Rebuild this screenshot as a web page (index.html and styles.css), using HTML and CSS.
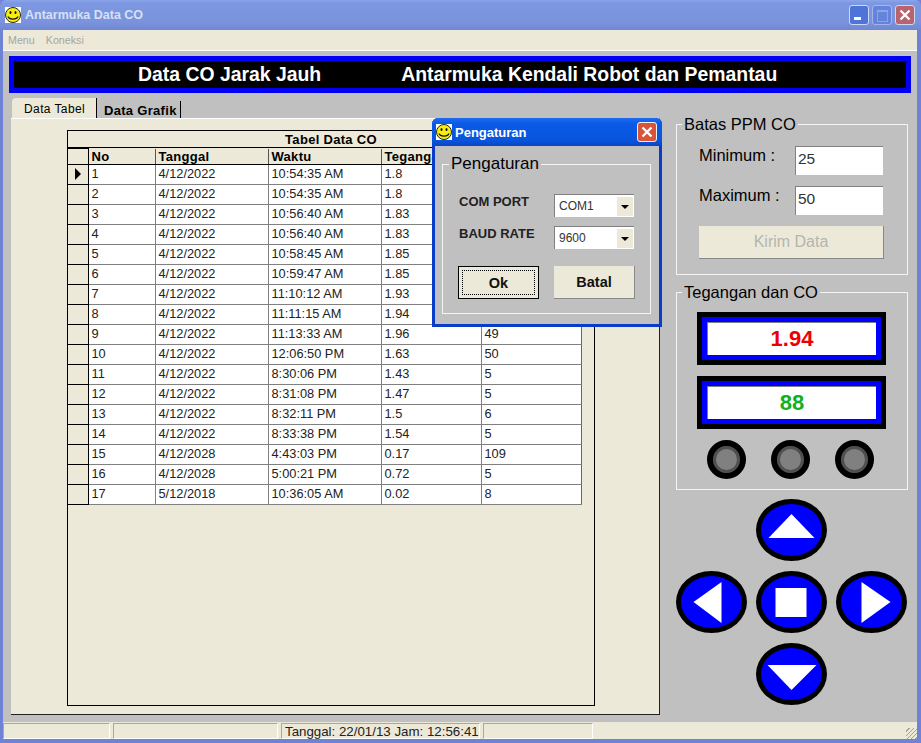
FILE: index.html
```html
<!DOCTYPE html>
<html>
    <head>
        <title>Antarmuka Data CO</title>
        <meta charset="UTF-8" />
        <link rel="stylesheet" href="styles.css">
    </head>
    <body>
        <svg width="0" height="0" class="defs">
            <symbol id="smiley" viewBox="0 0 16 16">
                <rect width="16" height="16" fill="#fff"/>
                <circle cx="8" cy="8" r="7.5" fill="#f6ee10" stroke="#222" stroke-width="1"/>
                <ellipse cx="5.5" cy="5.5" rx="1" ry="1.6" fill="#111"/>
                <ellipse cx="10.5" cy="5.5" rx="1" ry="1.6" fill="#111"/>
                <path d="M3 9.5c1.2 3.4 8.800 3.400 10 0" fill="none" stroke="#111" stroke-width="1.200"/>
            </symbol>
        </svg>
        <div class="window">
            <div class="titlebar">
                <svg class="app-icon"><use href="#smiley"/></svg>
                <span class="title-text">Antarmuka Data CO</span>
                <div class="win-buttons">
                    <div class="win-btn"><span class="min-mark"></span></div>
                    <div class="win-btn win-btn-off"><span class="max-mark"></span></div>
                    <div class="win-btn win-btn-close">
                        <svg viewBox="0 0 20 20"><path d="M5 5l10 10M15 5L5 15" stroke="#fff" stroke-width="2.600"/></svg>
                    </div>
                </div>
            </div>
            <div class="menubar">
                <span>Menu</span>
                <span>Koneksi</span>
            </div>
            <div class="client">
                <div class="banner">
                    <span>Data CO Jarak Jauh</span>
                    <span>Antarmuka Kendali Robot dan Pemantau</span>
                </div>
                <div class="main">
                    <div class="tabs-area">
                        <div class="tab-strip">
                            <div class="tab tab-active">Data Tabel</div>
                            <div class="tab">Data Grafik</div>
                        </div>
                        <div class="tab-pane">
                            <div class="grid">
                                <div class="grid-caption">Tabel Data CO</div>
                                <table>
                                    <colgroup>
                                        <col class="col-ind"><col class="col-no"><col class="col-date">
                                        <col class="col-time"><col class="col-volt"><col class="col-co">
                                    </colgroup>
                                    <thead>
                                        <tr><th class="ind"></th><th>No</th><th>Tanggal</th><th>Waktu</th><th>Tegangan</th><th>CO</th></tr>
                                    </thead>
                                    <tbody id="rows"></tbody>
                                </table>
                            </div>
                        </div>
                    </div>
                    <div class="side">
                        <fieldset class="group group-limit">
                            <legend>Batas PPM CO</legend>
                            <div class="limit-row"><label>Minimum :</label><div class="textbox">25</div></div>
                            <div class="limit-row"><label>Maximum :</label><div class="textbox">50</div></div>
                            <button class="send-btn">Kirim Data</button>
                        </fieldset>
                        <fieldset class="group group-volt">
                            <legend>Tegangan dan CO</legend>
                            <div class="readout"><div class="readout-inner red">1.94</div></div>
                            <div class="readout"><div class="readout-inner green">88</div></div>
                            <div class="lamps">
                                <div class="lamp"></div>
                                <div class="lamp"></div>
                                <div class="lamp"></div>
                            </div>
                        </fieldset>
                        <div class="pad">
                            <div class="pad-btn pad-up"><svg viewBox="0 0 70 62"><path d="M35 15L58 39H12z"/></svg></div>
                            <div class="pad-btn pad-left"><svg viewBox="0 0 70 62"><path d="M45 11V52L17 31z"/></svg></div>
                            <div class="pad-btn pad-stop"><svg viewBox="0 0 70 62"><path d="M19 17H50V46H19z"/></svg></div>
                            <div class="pad-btn pad-right"><svg viewBox="0 0 70 62"><path d="M25 11V52L54 31z"/></svg></div>
                            <div class="pad-btn pad-down"><svg viewBox="0 0 70 62"><path d="M11 22H60L35 47z"/></svg></div>
                        </div>
                    </div>
                </div>
                <div class="statusbar">
                    <div class="panel p1"></div>
                    <div class="panel p2"></div>
                    <div class="panel p3">Tanggal: 22/01/13 Jam: 12:56:41</div>
                    <div class="panel p4"></div>
                    <div class="panel p5"></div>
                </div>
            </div>
        </div>

        <div class="dialog">
            <div class="dialog-title">
                <svg class="app-icon"><use href="#smiley"/></svg>
                <span>Pengaturan</span>
                <div class="dialog-close">
                    <svg viewBox="0 0 20 20"><path d="M5 5l10 10M15 5L5 15" stroke="#fff" stroke-width="2.600"/></svg>
                </div>
            </div>
            <div class="dialog-body">
                <fieldset class="group group-dialog">
                    <legend>Pengaturan</legend>
                    <div class="combo-row">
                        <label>COM PORT</label>
                        <div class="combo"><span>COM1</span><i class="combo-arrow"></i></div>
                    </div>
                    <div class="combo-row">
                        <label>BAUD RATE</label>
                        <div class="combo"><span>9600</span><i class="combo-arrow"></i></div>
                    </div>
                    <div class="dialog-actions">
                        <button class="dlg-btn dlg-default"><span>Ok</span></button>
                        <button class="dlg-btn"><span>Batal</span></button>
                    </div>
                </fieldset>
            </div>
        </div>

        <script>
            const data = [
                ["4/12/2022", "10:54:35 AM", "1.8", "45"],
                ["4/12/2022", "10:54:35 AM", "1.8", "45"],
                ["4/12/2022", "10:56:40 AM", "1.83", "46"],
                ["4/12/2022", "10:56:40 AM", "1.83", "46"],
                ["4/12/2022", "10:58:45 AM", "1.85", "47"],
                ["4/12/2022", "10:59:47 AM", "1.85", "47"],
                ["4/12/2022", "11:10:12 AM", "1.93", "48"],
                ["4/12/2022", "11:11:15 AM", "1.94", "48"],
                ["4/12/2022", "11:13:33 AM", "1.96", "49"],
                ["4/12/2022", "12:06:50 PM", "1.63", "50"],
                ["4/12/2022", "8:30:06 PM", "1.43", "5"],
                ["4/12/2022", "8:31:08 PM", "1.47", "5"],
                ["4/12/2022", "8:32:11 PM", "1.5", "6"],
                ["4/12/2022", "8:33:38 PM", "1.54", "5"],
                ["4/12/2028", "4:43:03 PM", "0.17", "109"],
                ["4/12/2028", "5:00:21 PM", "0.72", "5"],
                ["5/12/2018", "10:36:05 AM", "0.02", "8"],
            ];

            const rows = document.getElementById("rows");
            data.forEach((row, i) => {
                const tr = document.createElement("tr");
                const ind = document.createElement("td");
                ind.className = i === 0 ? "ind current" : "ind";
                tr.appendChild(ind);
                [i + 1, ...row].forEach((value) => {
                    const td = document.createElement("td");
                    td.textContent = value;
                    tr.appendChild(td);
                });
                rows.appendChild(tr);
            });
        </script>
    </body>
</html>
```

FILE: styles.css
```css
html, body {
    margin: 0;
    height: 100%;
    overflow: hidden;
}
body {
    font-family: "Liberation Sans", Arial, sans-serif;
    font-size: 12px;
    background-color: #c0c0c0;
    color: #000;
}
.defs {
    display: block;
    height: 0;
}
.window {
    display: flex;
    flex-direction: column;
    width: 921px;
    height: 743px;
    box-sizing: border-box;
    padding: 0 4px 4px 3px;
    background-color: #6f83d6;
}
.titlebar {
    display: flex;
    align-items: center;
    height: 30px;
    margin: 0 -4px 0 -3px;
    padding: 0 6px 0 5px;
    box-sizing: border-box;
    background: linear-gradient(to bottom, #8aa6e8 0, #7d97e2 10%, #7a93dc 75%, #6f86d3 100%);
    border-radius: 6px 6px 0 0;
}
.app-icon {
    width: 16px;
    height: 16px;
    flex: none;
}
.title-text {
    margin-left: 4px;
    font-weight: bold;
    font-size: 12.500px;
    color: #d6e0f6;
}
.win-buttons {
    display: flex;
    gap: 3px;
    margin-left: auto;
}
.win-btn {
    position: relative;
    display: flex;
    width: 20px;
    height: 20px;
    box-sizing: border-box;
    border: 1px solid #cdd8f4;
    border-radius: 3px;
    background-color: #4f74d8;
}
.win-btn-off {
    opacity: 0.5;
}
.win-btn-close {
    background-color: #b9636f;
}
.min-mark {
    width: 7px;
    height: 3px;
    margin: 11px 0 0 4px;
    background-color: #fff;
}
.max-mark {
    width: 9px;
    height: 9px;
    margin: 4px 0 0 4px;
    border: 1px solid #9fb3ea;
    border-top-width: 2px;
}
.menubar {
    display: flex;
    align-items: center;
    gap: 11px;
    height: 20px;
    padding-left: 5px;
    background-color: #ece9d8;
    border-bottom: 1px solid #fff;
    color: #a5a5a0;
    font-size: 10.700px;
}
.client {
    display: flex;
    flex-direction: column;
    flex: 1;
    min-height: 0;
    background-color: #c0c0c0;
}
.banner {
    display: flex;
    align-items: center;
    height: 37px;
    box-sizing: border-box;
    margin: 5px 6px 0 6px;
    padding-left: 124px;
    gap: 80px;
    border: 5px solid #0000f5;
    background-color: #000;
    color: #fff;
    font-size: 19.400px;
    font-weight: bold;
}
.main {
    display: flex;
    flex: 1;
    min-height: 0;
    padding: 5px 6px 0 8px;
}
.tabs-area {
    display: flex;
    flex-direction: column;
    width: 649px;
}
.tab-strip {
    display: flex;
    align-items: flex-end;
    height: 20px;
    padding-left: 1px;
}
.tab {
    height: 17px;
    line-height: 19px;
    margin-left: 2px;
    padding: 0 3px 0 5px;
    border-right: 1px solid #000;
    font-size: 13px;
    font-weight: bold;
    letter-spacing: 0.300px;
}
.tab-active {
    height: 20px;
    line-height: 22px;
    width: 72px;
    margin-left: 0;
    padding: 0 0 0 12px;
    background-color: #ece9d8;
    border-radius: 4px 0 0 0;
    font-size: 12px;
    font-weight: normal;
    letter-spacing: 0.400px;
}
.tab-pane {
    display: flex;
    box-sizing: border-box;
    height: 597px;
    padding: 11px 64px 8px 56px;
    background-color: #ece9d8;
    border-right: 1px solid #222;
    border-bottom: 1px solid #222;
    border-top: 1px solid #fff;
}
.grid {
    flex: 1;
    border: 1px solid #000;
}
.grid-caption {
    height: 16px;
    line-height: 18px;
    text-align: center;
    border-bottom: 1px solid #000;
    font-size: 13px;
    font-weight: bold;
    letter-spacing: 0.300px;
}
table {
    table-layout: fixed;
    width: 513px;
    border-collapse: collapse;
}
.col-ind { width: 20px; }
.col-no { width: 67px; }
.col-date { width: 113px; }
.col-time { width: 113px; }
.col-volt { width: 100px; }
.col-co { width: 100px; }
th {
    height: 15px;
    padding: 0 0 0 3px;
    text-align: left;
    border: 1px solid #555;
    border-top: none;
    border-bottom-color: #000;
    font-size: 13px;
    line-height: 15px;
    font-weight: bold;
    letter-spacing: 0.300px;
    overflow: hidden;
}
td {
    height: 16px;
    padding: 0 0 3px 3px;
    border: 1px solid #808080;
    background-color: #fff;
    color: #222;
    font-size: 12.800px;
    line-height: 15px;
    white-space: nowrap;
}
td:last-child, th:last-child {
    border-right: 1px solid #666;
}
th.ind, td.ind {
    padding: 0;
    background-color: #ece9d8;
    border: 1px solid #000;
    border-left: none;
}
td.current {
    position: relative;
}
td.current::after {
    content: "";
    position: absolute;
    left: 7px;
    top: 3px;
    border-left: 6px solid #000;
    border-top: 6px solid transparent;
    border-bottom: 6px solid transparent;
}
.side {
    display: flex;
    flex-direction: column;
    align-items: flex-start;
    width: 235px;
    margin-left: 16px;
}
.group {
    margin: 0;
    padding: 0;
    min-width: 0;
    box-sizing: border-box;
    border: 1px solid #f4f4f4;
}
.group legend {
    padding: 0 2px;
    font-size: 16.500px;
    line-height: 16px;
}
.group-limit {
    width: 232px;
    height: 159px;
    margin-top: 18px;
    padding: 0 24px 0 22px;
}
.group-limit legend {
    margin-left: -17px;
}
.limit-row {
    display: flex;
    justify-content: space-between;
    height: 30px;
    margin-bottom: 10px;
}
.limit-row:first-of-type {
    margin-top: 14px;
}
.limit-row label {
    font-size: 16.500px;
    line-height: 19px;
}
.textbox {
    width: 88px;
    height: 29px;
    box-sizing: border-box;
    padding: 3px 0 0 2px;
    background-color: #fff;
    border-top: 1px solid #808080;
    border-left: 1px solid #808080;
    font-size: 15.500px;
    color: #333;
}
.send-btn {
    display: block;
    width: 185px;
    height: 33px;
    padding: 0;
    border: none;
    border-right: 1px solid #888;
    border-bottom: 1px solid #888;
    background-color: #ece9d8;
    color: #b5b5b0;
    font-family: "Liberation Sans", sans-serif;
    font-size: 16px;
}
.group-volt {
    width: 232px;
    height: 206px;
    margin-top: 9px;
    padding: 12px 0 0 20px;
}
.group-volt legend {
    margin-left: -15px;
}
.readout {
    width: 189px;
    height: 53px;
    box-sizing: border-box;
    margin-bottom: 11px;
    padding: 5px;
    background-color: #00f;
    border: 5px solid #000;
}
.readout-inner {
    height: 33px;
    box-sizing: border-box;
    background-color: #fff;
    border-top: 1px solid #808080;
    border-left: 1px solid #808080;
    text-align: center;
    font-size: 22px;
    font-weight: bold;
    line-height: 32px;
}
.red { color: #ee0000; }
.green { color: #10b020; }
.lamps {
    display: flex;
    gap: 25px;
    margin-left: 10px;
    margin-top: 3px;
}
.lamp {
    width: 39px;
    height: 39px;
    box-sizing: border-box;
    border: 6px solid #000;
    border-radius: 50%;
    background-color: #808080;
    box-shadow: inset 0 0 0 3px #505050;
}
.pad {
    display: grid;
    grid-template-columns: repeat(3, 71px);
    grid-template-rows: repeat(3, 62px);
    column-gap: 9px;
    row-gap: 10px;
    margin-top: 9px;
}
.pad-btn {
    width: 71px;
    height: 62px;
    box-sizing: border-box;
    border: 5px solid #000;
    border-radius: 50%;
    background-color: #00f;
}
.pad-btn svg {
    display: block;
    width: 71px;
    height: 62px;
    margin: -5px;
    fill: #fff;
}
.pad-up { grid-column: 2; grid-row: 1; }
.pad-left { grid-column: 1; grid-row: 2; }
.pad-stop { grid-column: 2; grid-row: 2; }
.pad-right { grid-column: 3; grid-row: 2; }
.pad-down { grid-column: 2; grid-row: 3; }
.statusbar {
    display: flex;
    gap: 3px;
    height: 17px;
    padding-top: 1px;
    box-sizing: border-box;
    background-color: #ece9d8;
}
.panel {
    box-sizing: border-box;
    height: 16px;
    padding-left: 3px;
    border-top: 1px solid #aca899;
    border-left: 1px solid #aca899;
    border-right: 1px solid #fff;
    border-bottom: 1px solid #fff;
    font-size: 13.300px;
    line-height: 16px;
    color: #222;
}
.p1 { width: 107px; }
.p2 { width: 165px; }
.p3 { width: 199px; }
.p4 { width: 110px; }
.p5 {
    flex: 1;
    border: none;
    background: repeating-linear-gradient(135deg, transparent 0 2px, #a5a294 2px 3px) no-repeat right bottom / 11px 11px;
}
.dialog {
    position: absolute;
    left: 432px;
    top: 118px;
    width: 230px;
    height: 209px;
    box-sizing: border-box;
    padding: 0 3px 3px 3px;
    background-color: #0a3ccc;
    border-radius: 6px 6px 0 0;
}
.dialog-title {
    display: flex;
    align-items: center;
    gap: 3px;
    height: 28px;
    margin: 0 -3px;
    padding: 0 5px 0 4px;
    background: linear-gradient(to bottom, #1f6cf0 0, #0a5ae6 20%, #0855dd 80%, #0a44c4 100%);
    border-radius: 6px 6px 0 0;
    color: #fff;
    font-weight: bold;
    font-size: 13px;
}
.dialog-close {
    width: 20px;
    height: 20px;
    box-sizing: border-box;
    margin-left: auto;
    border: 1px solid #f0f0f0;
    border-radius: 3px;
    background-color: #d8553a;
}
.dialog-close svg,
.win-btn-close svg {
    display: block;
    width: 18px;
    height: 18px;
}
.dialog-body {
    height: 178px;
    box-sizing: border-box;
    padding: 10px 8px 0 7px;
    background-color: #c0c0c0;
}
.group-dialog {
    height: 158px;
    padding: 0 16px 0 16px;
}
.group-dialog legend {
    margin-left: -10px;
    font-size: 17px;
}
.combo-row {
    display: flex;
    justify-content: space-between;
    align-items: flex-start;
    height: 26px;
    margin-bottom: 6px;
}
.combo-row:first-of-type {
    margin-top: 22px;
}
.combo-row label {
    padding-top: 1px;
    font-size: 13px;
    font-weight: bold;
    line-height: 14px;
    color: #222;
}
.combo {
    display: flex;
    align-items: center;
    justify-content: space-between;
    width: 80px;
    height: 23px;
    box-sizing: border-box;
    padding: 1px 1px 1px 4px;
    background-color: #fff;
    border-top: 1px solid #808080;
    border-left: 1px solid #808080;
    font-size: 12px;
    color: #333;
}
.combo-arrow {
    position: relative;
    width: 16px;
    height: 19px;
    background-color: #ece9d8;
}
.combo-arrow::after {
    content: "";
    position: absolute;
    left: 4px;
    top: 8px;
    border-top: 4px solid #000;
    border-left: 4px solid transparent;
    border-right: 4px solid transparent;
}
.dialog-actions {
    display: flex;
    justify-content: space-between;
    margin: 14px -1px 0 -1px;
}
.dlg-btn {
    width: 81px;
    height: 33px;
    padding: 3px;
    border: none;
    border-right: 1px solid #888;
    border-bottom: 1px solid #888;
    background-color: #ece9d8;
    font-family: "Liberation Sans", sans-serif;
    font-size: 14.500px;
    font-weight: bold;
    color: #111;
}
.dlg-btn span {
    display: block;
    height: 100%;
    line-height: 25px;
    border: 1px solid transparent;
    box-sizing: border-box;
}
.dlg-default {
    border: 1px solid #000;
}
.dlg-default span {
    border: 1px dotted #000;
}
```
